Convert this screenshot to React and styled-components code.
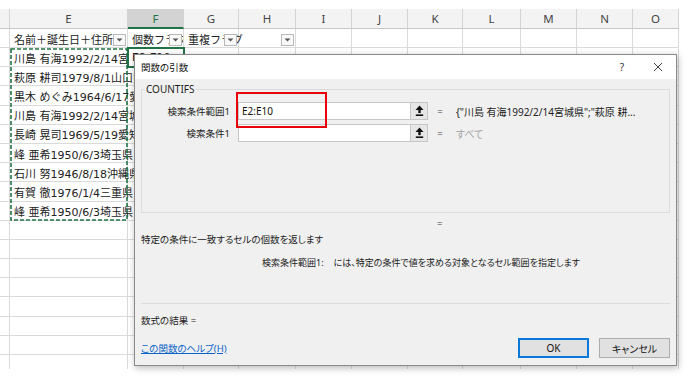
import React from 'react';
import styled, { createGlobalStyle } from 'styled-components';

const GlobalStyle = createGlobalStyle`
  html, body { margin: 0; padding: 0; background: #fff; }
  #root { width: 688px; height: 377px; }
`;

const COLS = [
  { key: 'D', w: 10, label: '' },
  { key: 'E', w: 118, label: 'E' },
  { key: 'F', w: 56, label: 'F', sel: true },
  { key: 'G', w: 55, label: 'G' },
  { key: 'H', w: 57, label: 'H' },
  { key: 'I', w: 56, label: 'I' },
  { key: 'J', w: 56, label: 'J' },
  { key: 'K', w: 55, label: 'K' },
  { key: 'L', w: 58, label: 'L' },
  { key: 'M', w: 56, label: 'M' },
  { key: 'N', w: 56, label: 'N' },
  { key: 'O', w: 46, label: 'O' },
];

const FILTERS = {
  E: { text: '名前＋誕生日＋住所', clip: true },
  F: { text: '個数フラグ', clip: true },
  G: { text: '重複フラグ' },
  H: { text: '' },
};

const NAMES = [
  '川島 有海1992/2/14宮城県',
  '萩原 耕司1979/8/1山口県',
  '黒木 めぐみ1964/6/17愛知県',
  '川島 有海1992/2/14宮城県',
  '長崎 晃司1969/5/19愛知県',
  '峰 亜希1950/6/3埼玉県',
  '石川 努1946/8/18沖縄県',
  '有賀 徹1976/1/4三重県',
  '峰 亜希1950/6/3埼玉県',
];

const TOTAL_ROWS = 18;

const Page = styled.div`
  position: relative;
  width: 688px;
  height: 377px;
  overflow: hidden;
  background: #fff;
  padding-top: 9px;
  box-sizing: border-box;
`;

const Sheet = styled.div`
  display: grid;
  width: 679px;
  height: 360px;
  overflow: hidden;
  grid-template-columns: ${COLS.map((c) => c.w + 'px').join(' ')};
  grid-template-rows: 20px 19px repeat(${TOTAL_ROWS - 1}, 19.2px);
  font-family: "DejaVu Sans", "Noto Sans CJK JP", sans-serif;
  font-size: 11px;
  color: #222;
`;

const HeadCell = styled.div`
  box-sizing: border-box;
  background: ${(p) => (p.$sel ? '#d3d3d3' : '#f3f3f3')};
  border-right: 1px solid #d4d4d4;
  border-bottom: ${(p) => (p.$sel ? '2px solid #217346' : '1px solid #c6c6c6')};
  display: flex;
  align-items: center;
  justify-content: center;
  color: ${(p) => (p.$sel ? '#217346' : '#444')};
  font-family: "Noto Sans", sans-serif;
  font-size: 11.5px;
`;

const Cell = styled.div`
  box-sizing: border-box;
  position: relative;
  border-right: 1px solid #dadada;
  border-bottom: 1px solid #dadada;
  padding: 1px 3px 0 4px;
  display: flex;
  align-items: center;
  white-space: nowrap;
  overflow: ${(p) => (p.$clip ? 'hidden' : 'visible')};
  outline: ${(p) => (p.$active ? '2px solid #217346' : 'none')};
  outline-offset: -1px;
  z-index: ${(p) => (p.$active ? 1 : 'auto')};
`;

const Drop = styled.div`
  position: absolute;
  right: 1px;
  bottom: 1px;
  width: 13px;
  height: 12px;
  box-sizing: border-box;
  border: 1px solid #b8b8b8;
  background: #f9f9f9;
  display: flex;
  align-items: center;
  justify-content: center;
`;

const Marquee = styled.svg`
  position: absolute;
  left: 10px;
  top: 48px;
  z-index: 2;
`;

const RedBox = styled.div`
  position: absolute;
  left: 236px;
  top: 92px;
  width: 91px;
  height: 36px;
  box-sizing: border-box;
  border: 2px solid #e8000b;
  z-index: 10;
`;

const Dialog = styled.div`
  position: absolute;
  left: 134px;
  top: 54px;
  width: 543px;
  height: 312px;
  box-sizing: border-box;
  border: 1px solid #8a8a8a;
  background: #f0f0f0;
  box-shadow: 1px 2px 7px rgba(0, 0, 0, 0.28);
  display: flex;
  flex-direction: column;
  font-family: "Noto Sans", "Noto Sans CJK JP", sans-serif;
  font-feature-settings: "palt";
  color: #1e1e1e;
  z-index: 5;
`;

const TitleBar = styled.div`
  height: 24px;
  flex: none;
  background: #fff;
  display: flex;
  align-items: center;
  padding-left: 6px;
  font-size: 9.5px;
  color: #111;
`;

const Title = styled.div`
  flex: 1;
`;

const TitleBtn = styled.div`
  width: 36px;
  height: 100%;
  display: flex;
  align-items: center;
  justify-content: center;
  color: #333;
  font-size: 10px;
`;

const Body = styled.div`
  flex: 1;
  display: flex;
  flex-direction: column;
  padding: 0 6px 7px 6px;
  font-size: 9.5px;
`;

const Group = styled.fieldset`
  margin: 3px 0 0;
  padding: 6px 0 0;
  border: 1px solid #dcdcdc;
  height: 131px;
  box-sizing: border-box;
  min-width: 0;
`;

const Legend = styled.legend`
  padding: 0 2px;
  margin-left: 2px;
  font-size: 10px;
  line-height: 14px;
  color: #1e1e1e;
`;

const ArgGrid = styled.div`
  display: grid;
  grid-template-columns: 96px 173px 17px 24px 1fr;
  row-gap: 4px;
  align-items: center;
`;

const ArgLabel = styled.div`
  text-align: right;
  padding-right: 8px;
  white-space: nowrap;
  color: #222;
`;

const Input = styled.div`
  height: 18px;
  box-sizing: border-box;
  border: 1px solid #c6c6c6;
  background: #fff;
  padding-left: 3px;
  display: flex;
  align-items: center;
  font-size: 10px;
  color: #111;
`;

const RefBtn = styled.div`
  height: 18px;
  box-sizing: border-box;
  border: 1px solid #c6c6c6;
  border-left: none;
  background: #e6e6e6;
  display: flex;
  align-items: center;
  justify-content: center;
`;

const Eq = styled.div`
  text-align: center;
  color: #444;
`;

const ArgValue = styled.div`
  padding-left: 4px;
  white-space: nowrap;
  overflow: hidden;
  font-size: 10px;
  color: ${(p) => (p.$muted ? '#a3a3a3' : '#222')};
`;

const EqLine = styled.div`
  margin-top: 4px;
  line-height: 14px;
  padding-left: 296px;
  color: #444;
`;

const Desc = styled.div`
  margin-top: 2px;
  line-height: 14px;
  color: #222;
`;

const ArgDesc = styled.div`
  margin-top: 9px;
  line-height: 14px;
  padding-left: 121px;
  font-size: 9px;
  color: #222;
  white-space: nowrap;
`;

const ArgName = styled.span`
  margin-right: 10px;
`;

const Separator = styled.div`
  margin-top: 33px;
  height: 1px;
  background: #dcdcdc;
`;

const Result = styled.div`
  margin-top: 10px;
  line-height: 14px;
  color: #222;
`;

const Footer = styled.div`
  margin-top: 10px;
  display: flex;
  align-items: center;
  gap: 10px;
`;

const HelpLink = styled.a`
  flex: 1;
  color: #0a64c8;
  text-decoration: underline;
  cursor: pointer;
`;

const Button = styled.button`
  width: 71px;
  height: 20px;
  box-sizing: border-box;
  background: #e1e1e1;
  border: ${(p) => (p.$primary ? '2px solid #0a78d7' : '1px solid #adadad')};
  font-family: "Noto Sans", "Noto Sans CJK JP", sans-serif;
  font-feature-settings: "palt";
  font-size: 10px;
  color: #111;
  padding: 0;
`;

const DropArrow = () => (
  <svg width="7" height="4" viewBox="0 0 7 4">
    <polygon points="0.5,0.5 6.5,0.5 3.5,3.5" fill="#555" />
  </svg>
);

const RefIcon = () => (
  <svg width="9" height="12" viewBox="0 0 9 12">
    <polygon points="4.5,0.5 8.5,5 0.5,5" fill="#111" />
    <rect x="3.3" y="4.5" width="2.4" height="3.6" fill="#111" />
    <rect x="0.8" y="9.4" width="7.4" height="1.6" fill="#111" />
  </svg>
);

const CloseIcon = () => (
  <svg width="10" height="10" viewBox="0 0 10 10">
    <path d="M1 1 L9 9 M9 1 L1 9" stroke="#444" strokeWidth="1" fill="none" />
  </svg>
);

function renderRow(r) {
  return COLS.map((c) => {
    const k = `${r}-${c.key}`;
    if (r === 0) {
      const f = FILTERS[c.key];
      if (!f) return <Cell key={k} />;
      return (
        <Cell key={k} $clip={f.clip}>
          {f.text}
          <Drop>
            <DropArrow />
          </Drop>
        </Cell>
      );
    }
    if (c.key === 'E' && r <= NAMES.length) {
      return (
        <Cell key={k} $clip={r === 1}>
          {NAMES[r - 1]}
        </Cell>
      );
    }
    if (c.key === 'F' && r === 1) {
      return (
        <Cell key={k} $active $clip>
          E2:E10
        </Cell>
      );
    }
    return <Cell key={k} />;
  });
}

export default function App() {
  const rows = [];
  for (let r = 0; r < TOTAL_ROWS; r++) rows.push(...renderRow(r));
  return (
    <>
      <GlobalStyle />
      <Page>
        <Sheet>
          {COLS.map((c) => (
            <HeadCell key={'h' + c.key} $sel={c.sel}>
              {c.label}
            </HeadCell>
          ))}
          {rows}
        </Sheet>

        <Marquee width="118" height="173" viewBox="0 0 118 173">
          <rect
            x="1"
            y="1"
            width="116"
            height="171"
            fill="none"
            stroke="#217346"
            strokeWidth="1.6"
            strokeDasharray="4 2"
          />
        </Marquee>

        <Dialog>
          <TitleBar>
            <Title>関数の引数</Title>
            <TitleBtn>?</TitleBtn>
            <TitleBtn>
              <CloseIcon />
            </TitleBtn>
          </TitleBar>
          <Body>
            <Group>
              <Legend>COUNTIFS</Legend>
              <ArgGrid>
                <ArgLabel>検索条件範囲1</ArgLabel>
                <Input>E2:E10</Input>
                <RefBtn>
                  <RefIcon />
                </RefBtn>
                <Eq>=</Eq>
                <ArgValue>{'{"川島 有海1992/2/14宮城県";"萩原 耕...'}</ArgValue>

                <ArgLabel>検索条件1</ArgLabel>
                <Input />
                <RefBtn>
                  <RefIcon />
                </RefBtn>
                <Eq>=</Eq>
                <ArgValue $muted>すべて</ArgValue>
              </ArgGrid>
            </Group>
            <EqLine>=</EqLine>
            <Desc>特定の条件に一致するセルの個数を返します</Desc>
            <ArgDesc>
              <ArgName>検索条件範囲1:</ArgName>
              には、特定の条件で値を求める対象となるセル範囲を指定します
            </ArgDesc>
            <Separator />
            <Result>数式の結果 =</Result>
            <Footer>
              <HelpLink>この関数のヘルプ(H)</HelpLink>
              <Button $primary>OK</Button>
              <Button>キャンセル</Button>
            </Footer>
          </Body>
        </Dialog>

        <RedBox />
      </Page>
    </>
  );
}
